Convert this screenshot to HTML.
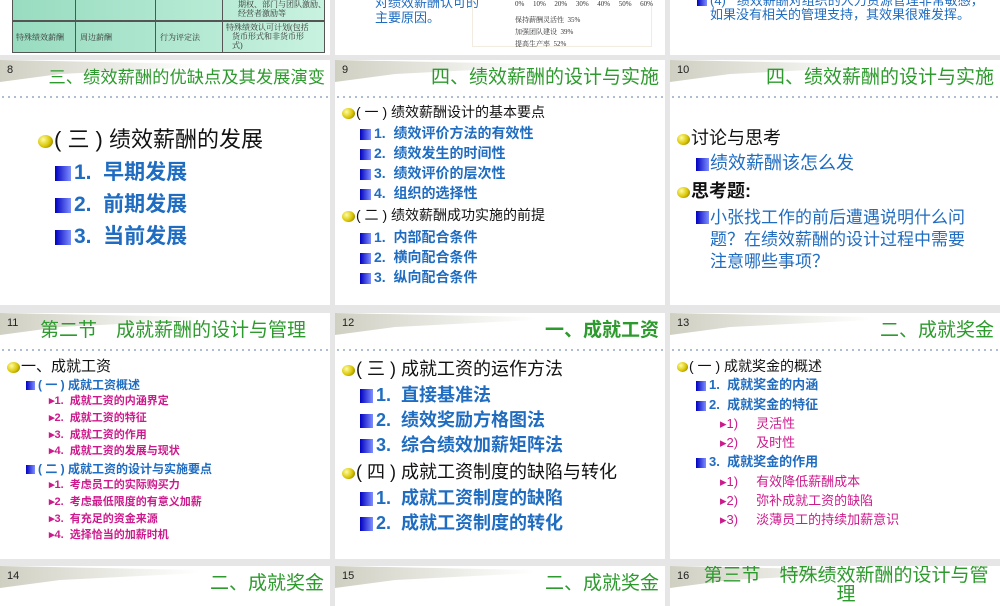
<!DOCTYPE html>
<html><head><meta charset="utf-8"><style>
*{margin:0;padding:0;box-sizing:border-box}
body{width:1000px;height:600px;background:#e6e6e6;position:relative;overflow:hidden;font-family:"Liberation Sans","Noto Sans CJK SC",sans-serif}
.s{position:absolute;background:#fff;overflow:hidden}
.t{position:absolute;white-space:nowrap;line-height:1}
.num{position:absolute;left:7px;top:4px;font-size:11px;color:#222}
.sw{position:absolute;left:0;top:0}
.ttl{position:absolute;right:6px;top:8px;font-size:19px;color:#2d9a2d;white-space:nowrap;line-height:1}
.dots{position:absolute;left:0;right:0;top:36px;height:2px;background-image:radial-gradient(circle,#9fb0cc 0.8px,transparent 1.2px);background-size:6px 2px}
.ball{display:inline-block;width:13px;height:11px;border-radius:50%;background:radial-gradient(circle at 35% 35%,#fffca0,#d8c400 55%,#6d6000);vertical-align:middle;margin-right:1px}
.sq{display:inline-block;background:linear-gradient(90deg,#0000c0,#7f90ff);vertical-align:middle;margin-right:3px}
.b{color:#1f6cc0;font-weight:bold}
.m{color:#cc1a8c}
.tb{position:absolute;border:1px solid #555;background:linear-gradient(90deg,#98dcc0,#c8f2e0)}
.tiny{font-family:"Liberation Serif","Noto Serif CJK SC",serif;font-size:8px;color:#333;position:absolute;line-height:1.15}
</style></head><body>

<!-- top row -->
<div class="s" style="left:0;top:0;width:330px;height:55px">
 <div class="tb" style="left:12px;top:-2px;width:313px;height:23px"></div>
 <div class="tb" style="left:12px;top:21px;width:313px;height:32px"></div>
 <div style="position:absolute;left:75px;top:0;width:1px;height:53px;background:#555"></div>
 <div style="position:absolute;left:155px;top:0;width:1px;height:53px;background:#555"></div>
 <div style="position:absolute;left:222px;top:0;width:1px;height:53px;background:#555"></div>
 <div class="tiny" style="left:238px;top:0px">期权、部门与团队激励、<br>经营者激励等</div>
 <div class="tiny" style="left:16px;top:33px">特殊绩效薪酬</div>
 <div class="tiny" style="left:80px;top:33px">周边薪酬</div>
 <div class="tiny" style="left:160px;top:33px">行为评定法</div>
 <div class="tiny" style="left:226px;top:23px">特殊绩效认可计划(包括<br>&nbsp;&nbsp;&nbsp;货币形式和非货币形<br>&nbsp;&nbsp;&nbsp;式)</div>
</div>
<div class="s" style="left:335px;top:0;width:330px;height:55px">
 <div class="t" style="left:40px;top:-4px;font-size:13px;color:#1f6cc0">对绩效薪酬认可的</div>
 <div class="t" style="left:40px;top:11px;font-size:13px;color:#1f6cc0">主要原因。</div>
 <div style="position:absolute;left:137px;top:-2px;width:180px;height:49px;border:1px solid #f2ece0"></div>
 <div class="tiny" style="left:180px;top:0px;font-size:7px;width:138px;display:flex;justify-content:space-between"><span>0%</span><span>10%</span><span>20%</span><span>30%</span><span>40%</span><span>50%</span><span>60%</span></div>
 <div class="tiny" style="left:180px;top:16px;font-size:7px">保持薪酬灵活性&nbsp;&nbsp;35%</div>
 <div class="tiny" style="left:180px;top:28px;font-size:7px">加强团队建设&nbsp;&nbsp;39%</div>
 <div class="tiny" style="left:180px;top:40px;font-size:7px">提高生产率&nbsp;&nbsp;52%</div>
</div>
<div class="s" style="left:670px;top:0;width:330px;height:55px">
 <div class="t" style="left:27px;top:-6px;font-size:13px;color:#1f6cc0"><span class="sq" style="width:10px;height:9px"></span>(4)&nbsp;&nbsp;&nbsp;绩效薪酬对组织的人力资源管理非常敏感，</div>
 <div class="t" style="left:40px;top:8px;font-size:13px;color:#1f6cc0">如果没有相关的管理支持，其效果很难发挥。</div>
</div>

<!-- row 2 -->
<div class="s" style="left:0;top:60px;width:330px;height:245px">
 <svg class="sw" width="200" height="22"><defs><linearGradient id="g" x1="0" x2="1"><stop offset="0" stop-color="#cfcfc2"/><stop offset="1" stop-color="#fff"/></linearGradient></defs><polygon points="0,0 200,4 200,7 60,14 0,22" fill="url(#g)"/></svg>
 <div class="num">8</div>
 <div class="ttl" style="right:5px;font-size:17.3px;top:9px">三、绩效薪酬的优缺点及其发展演变</div>
 <div class="dots"></div>
 <div class="t" style="left:38px;top:69px;font-size:22px;color:#111"><span class="ball" style="width:15px;height:13px"></span>( 三 ) 绩效薪酬的发展</div>
 <div class="t b" style="left:55px;top:102px;font-size:21px"><span class="sq" style="width:16px;height:15px"></span>1.&nbsp; 早期发展</div>
 <div class="t b" style="left:55px;top:134px;font-size:21px"><span class="sq" style="width:16px;height:15px"></span>2.&nbsp; 前期发展</div>
 <div class="t b" style="left:55px;top:166px;font-size:21px"><span class="sq" style="width:16px;height:15px"></span>3.&nbsp; 当前发展</div>
</div>
<div class="s" style="left:335px;top:60px;width:330px;height:245px">
 <svg class="sw" width="200" height="22"><polygon points="0,0 200,4 200,7 60,14 0,22" fill="url(#g)"/></svg>
 <div class="num">9</div>
 <div class="ttl">四、绩效薪酬的设计与实施</div>
 <div class="dots"></div>
 <div class="t" style="left:7px;top:45px;font-size:14px;color:#111"><span class="ball"></span>( 一 ) 绩效薪酬设计的基本要点</div>
 <div class="t b" style="left:25px;top:66px;font-size:14px"><span class="sq" style="width:11px;height:11px"></span>1.&nbsp; 绩效评价方法的有效性</div>
 <div class="t b" style="left:25px;top:86px;font-size:14px"><span class="sq" style="width:11px;height:11px"></span>2.&nbsp; 绩效发生的时间性</div>
 <div class="t b" style="left:25px;top:106px;font-size:14px"><span class="sq" style="width:11px;height:11px"></span>3.&nbsp; 绩效评价的层次性</div>
 <div class="t b" style="left:25px;top:126px;font-size:14px"><span class="sq" style="width:11px;height:11px"></span>4.&nbsp; 组织的选择性</div>
 <div class="t" style="left:7px;top:148px;font-size:14px;color:#111"><span class="ball"></span>( 二 ) 绩效薪酬成功实施的前提</div>
 <div class="t b" style="left:25px;top:170px;font-size:14px"><span class="sq" style="width:11px;height:11px"></span>1.&nbsp; 内部配合条件</div>
 <div class="t b" style="left:25px;top:190px;font-size:14px"><span class="sq" style="width:11px;height:11px"></span>2.&nbsp; 横向配合条件</div>
 <div class="t b" style="left:25px;top:210px;font-size:14px"><span class="sq" style="width:11px;height:11px"></span>3.&nbsp; 纵向配合条件</div>
</div>
<div class="s" style="left:670px;top:60px;width:330px;height:245px">
 <svg class="sw" width="200" height="22"><polygon points="0,0 200,4 200,7 60,14 0,22" fill="url(#g)"/></svg>
 <div class="num">10</div>
 <div class="ttl">四、绩效薪酬的设计与实施</div>
 <div class="dots"></div>
 <div class="t" style="left:7px;top:69px;font-size:18px;color:#111"><span class="ball"></span>讨论与思考</div>
 <div class="t" style="left:26px;top:94px;font-size:18px;color:#1f6cc0"><span class="sq" style="width:13px;height:13px;margin-right:1px"></span>绩效薪酬该怎么发</div>
 <div class="t" style="left:7px;top:122px;font-size:18px;color:#111;font-weight:bold"><span class="ball"></span>思考题:</div>
 <span class="sq" style="position:absolute;left:26px;top:151px;width:13px;height:13px"></span>
 <div class="t" style="left:40px;top:147px;font-size:17px;color:#1f6cc0;line-height:22px">小张找工作的前后遭遇说明什么问<br>题？在绩效薪酬的设计过程中需要<br>注意哪些事项？</div>
</div>

<!-- row 3 -->
<div class="s" style="left:0;top:313px;width:330px;height:246px">
 <svg class="sw" width="200" height="22"><polygon points="0,0 200,4 200,7 60,14 0,22" fill="url(#g)"/></svg>
 <div class="num">11</div>
 <div class="ttl" style="left:40px;right:auto;top:8px;font-size:19px">第二节　成就薪酬的设计与管理</div>
 <div class="dots"></div>
 <div class="t" style="left:7px;top:46px;font-size:15px;color:#111"><span class="ball"></span>一、成就工资</div>
 <div class="t b" style="left:26px;top:66px;font-size:12px"><span class="sq" style="width:9px;height:9px"></span>( 一 ) 成就工资概述</div>
 <div class="t m" style="left:49px;top:83px;font-size:11px;font-weight:bold">▸1.&nbsp; 成就工资的内涵界定</div>
 <div class="t m" style="left:49px;top:100px;font-size:11px;font-weight:bold">▸2.&nbsp; 成就工资的特征</div>
 <div class="t m" style="left:49px;top:117px;font-size:11px;font-weight:bold">▸3.&nbsp; 成就工资的作用</div>
 <div class="t m" style="left:49px;top:133px;font-size:11px;font-weight:bold">▸4.&nbsp; 成就工资的发展与现状</div>
 <div class="t b" style="left:26px;top:150px;font-size:12px"><span class="sq" style="width:9px;height:9px"></span>( 二 ) 成就工资的设计与实施要点</div>
 <div class="t m" style="left:49px;top:167px;font-size:11px;font-weight:bold">▸1.&nbsp; 考虑员工的实际购买力</div>
 <div class="t m" style="left:49px;top:184px;font-size:11px;font-weight:bold">▸2.&nbsp; 考虑最低限度的有意义加薪</div>
 <div class="t m" style="left:49px;top:201px;font-size:11px;font-weight:bold">▸3.&nbsp; 有充足的资金来源</div>
 <div class="t m" style="left:49px;top:217px;font-size:11px;font-weight:bold">▸4.&nbsp; 选择恰当的加薪时机</div>
</div>
<div class="s" style="left:335px;top:313px;width:330px;height:246px">
 <svg class="sw" width="200" height="22"><polygon points="0,0 200,4 200,7 60,14 0,22" fill="url(#g)"/></svg>
 <div class="num">12</div>
 <div class="ttl" style="font-weight:bold">一、成就工资</div>
 <div class="dots"></div>
 <div class="t" style="left:7px;top:47px;font-size:18px;color:#111"><span class="ball"></span>( 三 ) 成就工资的运作方法</div>
 <div class="t b" style="left:25px;top:73px;font-size:18px"><span class="sq" style="width:13px;height:14px"></span>1.&nbsp; 直接基准法</div>
 <div class="t b" style="left:25px;top:98px;font-size:18px"><span class="sq" style="width:13px;height:14px"></span>2.&nbsp; 绩效奖励方格图法</div>
 <div class="t b" style="left:25px;top:123px;font-size:18px"><span class="sq" style="width:13px;height:14px"></span>3.&nbsp; 综合绩效加薪矩阵法</div>
 <div class="t" style="left:7px;top:150px;font-size:18px;color:#111"><span class="ball"></span>( 四 ) 成就工资制度的缺陷与转化</div>
 <div class="t b" style="left:25px;top:176px;font-size:18px"><span class="sq" style="width:13px;height:14px"></span>1.&nbsp; 成就工资制度的缺陷</div>
 <div class="t b" style="left:25px;top:201px;font-size:18px"><span class="sq" style="width:13px;height:14px"></span>2.&nbsp; 成就工资制度的转化</div>
</div>
<div class="s" style="left:670px;top:313px;width:330px;height:246px">
 <svg class="sw" width="200" height="22"><polygon points="0,0 200,4 200,7 60,14 0,22" fill="url(#g)"/></svg>
 <div class="num">13</div>
 <div class="ttl">二、成就奖金</div>
 <div class="dots"></div>
 <div class="t" style="left:7px;top:46px;font-size:14px;color:#111"><span class="ball" style="width:11px;height:10px"></span>( 一 ) 成就奖金的概述</div>
 <div class="t b" style="left:26px;top:65px;font-size:13px"><span class="sq" style="width:10px;height:10px"></span>1.&nbsp; 成就奖金的内涵</div>
 <div class="t b" style="left:26px;top:85px;font-size:13px"><span class="sq" style="width:10px;height:10px"></span>2.&nbsp; 成就奖金的特征</div>
 <div class="t m" style="left:50px;top:104px;font-size:13px">▸1)&nbsp;&nbsp;&nbsp;&nbsp; 灵活性</div>
 <div class="t m" style="left:50px;top:123px;font-size:13px">▸2)&nbsp;&nbsp;&nbsp;&nbsp; 及时性</div>
 <div class="t b" style="left:26px;top:142px;font-size:13px"><span class="sq" style="width:10px;height:10px"></span>3.&nbsp; 成就奖金的作用</div>
 <div class="t m" style="left:50px;top:162px;font-size:13px">▸1)&nbsp;&nbsp;&nbsp;&nbsp; 有效降低薪酬成本</div>
 <div class="t m" style="left:50px;top:181px;font-size:13px">▸2)&nbsp;&nbsp;&nbsp;&nbsp; 弥补成就工资的缺陷</div>
 <div class="t m" style="left:50px;top:200px;font-size:13px">▸3)&nbsp;&nbsp;&nbsp;&nbsp; 淡薄员工的持续加薪意识</div>
</div>

<!-- row 4 -->
<div class="s" style="left:0;top:566px;width:330px;height:40px">
 <svg class="sw" width="200" height="22"><polygon points="0,0 200,4 200,7 60,14 0,22" fill="url(#g)"/></svg>
 <div class="num">14</div>
 <div class="ttl">二、成就奖金</div>
</div>
<div class="s" style="left:335px;top:566px;width:330px;height:40px">
 <svg class="sw" width="200" height="22"><polygon points="0,0 200,4 200,7 60,14 0,22" fill="url(#g)"/></svg>
 <div class="num">15</div>
 <div class="ttl">二、成就奖金</div>
</div>
<div class="s" style="left:670px;top:566px;width:330px;height:40px">
 <svg class="sw" width="200" height="22"><polygon points="0,0 200,4 200,7 60,14 0,22" fill="url(#g)"/></svg>
 <div class="num">16</div>
 <div class="ttl" style="top:0px;left:26px;right:4px;font-size:19px;text-align:center;line-height:19px">第三节　特殊绩效新酬的设计与管<br>理</div>
</div>
</body></html>
